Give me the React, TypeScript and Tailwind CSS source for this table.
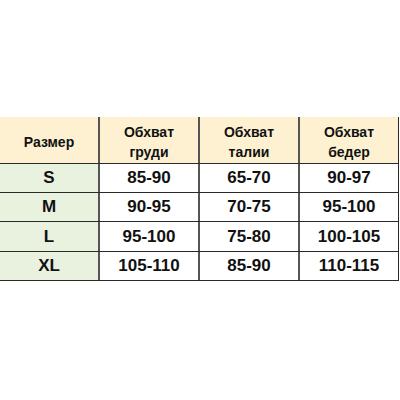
const header = ['Размер', 'Обхват\nгруди', 'Обхват\nталии', 'Обхват\nбедер'];

const rows = [
  ['S', '85-90', '65-70', '90-97'],
  ['M', '90-95', '70-75', '95-100'],
  ['L', '95-100', '75-80', '100-105'],
  ['XL', '105-110', '85-90', '110-115'],
];

const widths = ['w-[100px]', 'w-[100px]', 'w-[100px]', 'w-[99px]'];

export default function App() {
  return (
    <div
      className="w-[400px] h-[400px] bg-white pt-[117px] text-[#111]"
      style={{ fontFamily: '"Liberation Sans", Arial, sans-serif' }}
    >
      <div className="flex flex-col w-[399px]">
        {/* Header */}
        <div className="flex h-[47px] border-b border-[#2a2a2a] bg-[#fdf1d2]">
          {header.map((h, i) => (
            <div
              key={i}
              className={`${widths[i]} flex items-center justify-center pt-[4px] text-center text-[14px] font-bold leading-[20px] whitespace-pre-line ${
                i < 3 ? 'border-r-2 border-[#555]' : 'border-r border-[#2a2a2a]'
              }`}
            >
              {h}
            </div>
          ))}
        </div>

        {/* Body */}
        {rows.map((r, ri) => (
          <div
            key={ri}
            className={`flex border-b border-[#2a2a2a] ${ri === 2 ? 'h-[30px]' : 'h-[29px]'}`}
          >
            {r.map((c, ci) => (
              <div
                key={ci}
                className={`${widths[ci]} flex items-center justify-center text-[17px] font-bold ${
                  ci === 0 ? 'bg-[#e9f2de]' : 'bg-white'
                } ${ci < 3 ? 'border-r-2 border-[#555]' : 'border-r border-[#2a2a2a]'}`}
              >
                {c}
              </div>
            ))}
          </div>
        ))}
      </div>
    </div>
  );
}
